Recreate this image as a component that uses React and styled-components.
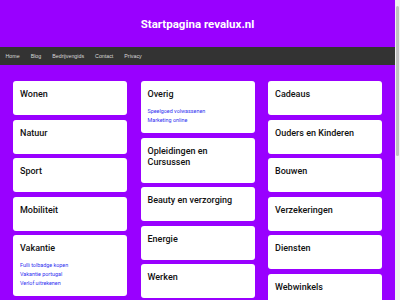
import React from "react";
import styled, { createGlobalStyle } from "styled-components";

const Global = createGlobalStyle`
  html, body { margin: 0; padding: 0; background: #f1f1f1; overflow: hidden; }
  body { font-family: Roboto, "Liberation Sans", Arial, sans-serif; }
  * { box-sizing: border-box; }
`;

const Frame = styled.div`
  display: flex;
  width: 400px;
  height: 300px;
  overflow: hidden;
`;

const Page = styled.div`
  width: 395px;
  flex: none;
  background: #9900ff;
  min-height: 300px;
`;

const Scrollbar = styled.div`
  width: 5px;
  flex: none;
  background: #f1f1f1;
  display: flex;
  flex-direction: column;
  align-items: center;
  padding-top: 6px;
`;

const Thumb = styled.div`
  width: 3px;
  height: 150px;
  border-radius: 2px;
  background: #c1c1c1;
`;

const Header = styled.header`
  height: 47px;
  display: flex;
  align-items: center;
  justify-content: center;
`;

const Title = styled.h1`
  margin: 0;
  font-size: 11.5px;
  font-weight: 700;
  color: #ffffff;
`;

const Nav = styled.nav`
  height: 18px;
  background: #333333;
  display: flex;
  align-items: center;
  padding-left: 0;
`;

const NavLink = styled.a`
  font-family: "Liberation Sans", Arial, sans-serif;
  font-size: 5.3px;
  color: #d8d8d8;
  padding: 0 5.5px;
  text-decoration: none;
`;

const Grid = styled.main`
  display: grid;
  grid-template-columns: repeat(3, 1fr);
  column-gap: 13.5px;
  padding: 16px 13px;
  align-items: start;
`;

const Column = styled.div`
  display: flex;
  flex-direction: column;
  gap: 4.6px;
`;

const Card = styled.section`
  background: #ffffff;
  border-radius: 3px;
  padding: 8px 7px;
`;

const CardTitle = styled.h2`
  margin: 0 0 7px;
  font-size: 9px;
  line-height: 11px;
  font-weight: 500;
  color: #111111;
`;

const LinkList = styled.ul`
  list-style: none;
  margin: 0;
  padding: 0;
`;

const Item = styled.li`
  font-size: 5.4px;
  line-height: 9px;
`;

const Link = styled.a`
  color: #3030f0;
  text-decoration: none;
`;

const columns = [
  [
    { title: "Wonen" },
    { title: "Natuur" },
    { title: "Sport" },
    { title: "Mobiliteit" },
    {
      title: "Vakantie",
      links: ["Fulli tolbadge kopen", "Vakantie portugal", "Verlof uitrekenen"],
    },
  ],
  [
    { title: "Overig", links: ["Speelgoed volwassenen", "Marketing online"] },
    { title: "Opleidingen en Cursussen" },
    { title: "Beauty en verzorging" },
    { title: "Energie" },
    { title: "Werken" },
  ],
  [
    { title: "Cadeaus" },
    { title: "Ouders en Kinderen" },
    { title: "Bouwen" },
    { title: "Verzekeringen" },
    { title: "Diensten" },
    { title: "Webwinkels" },
  ],
];

const navItems = ["Home", "Blog", "Bedrijvengids", "Contact", "Privacy"];

export default function App() {
  return (
    <>
      <Global />
      <Frame>
        <Page>
          <Header>
            <Title>Startpagina revalux.nl</Title>
          </Header>
          <Nav>
            {navItems.map((n) => (
              <NavLink key={n} href="#">
                {n}
              </NavLink>
            ))}
          </Nav>
          <Grid>
            {columns.map((col, i) => (
              <Column key={i}>
                {col.map((c) => (
                  <Card key={c.title}>
                    <CardTitle>{c.title}</CardTitle>
                    {c.links && (
                      <LinkList>
                        {c.links.map((l) => (
                          <Item key={l}>
                            <Link href="#">{l}</Link>
                          </Item>
                        ))}
                      </LinkList>
                    )}
                  </Card>
                ))}
              </Column>
            ))}
          </Grid>
        </Page>
        <Scrollbar>
          <Thumb />
        </Scrollbar>
      </Frame>
    </>
  );
}
